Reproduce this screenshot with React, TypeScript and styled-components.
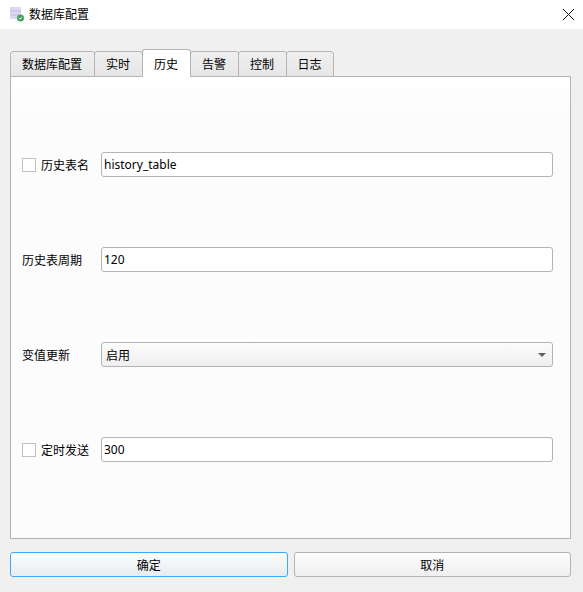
import React from 'react'
import styled, { createGlobalStyle } from 'styled-components'

const GlobalStyle = createGlobalStyle`
  html, body {
    margin: 0;
    padding: 0;
    background: #f0f0f0;
  }
  body {
    font-family: 'Noto Sans', 'Noto Sans CJK SC', sans-serif;
    font-size: 12px;
    color: #000;
  }
  * {
    box-sizing: border-box;
  }
`

const tabs = ['数据库配置', '实时', '历史', '告警', '控制', '日志']

export default function App() {
  return (
    <>
      <GlobalStyle />
      <Dialog>
        <TitleBar>
          <TitleIcon />
          <TitleText>数据库配置</TitleText>
          <CloseButton aria-label='关闭'>
            <svg width='13' height='13' viewBox='0 0 13 13'>
              <path d='M1 1 L12 12 M12 1 L1 12' stroke='#111' strokeWidth='1' fill='none' />
            </svg>
          </CloseButton>
        </TitleBar>
        <Content>
          <TabBar>
            {tabs.map((name, i) => (
              <Tab key={name} $active={name === '历史'} $wide={name.length > 2} $last={i === tabs.length - 1}>
                {name}
              </Tab>
            ))}
          </TabBar>
          <Panel>
            <Row>
              <CheckLabel>
                <CheckBox />
                <span>历史表名</span>
              </CheckLabel>
              <TextField defaultValue='history_table' />
            </Row>
            <Row>
              <Label>历史表周期</Label>
              <TextField defaultValue='120' />
            </Row>
            <Row>
              <Label>变值更新</Label>
              <Select>
                <span>启用</span>
                <Caret />
              </Select>
            </Row>
            <Row>
              <CheckLabel>
                <CheckBox />
                <span>定时发送</span>
              </CheckLabel>
              <TextField defaultValue='300' />
            </Row>
          </Panel>
          <Footer>
            <PushButton $primary>确定</PushButton>
            <PushButton>取消</PushButton>
          </Footer>
        </Content>
      </Dialog>
    </>
  )
}

function TitleIcon() {
  return (
    <IconWrap>
      <svg width='16' height='16' viewBox='0 0 16 16'>
        <rect x='0' y='0' width='11' height='12' rx='1' fill='#dcd6ef' />
        <rect x='0' y='3.5' width='11' height='1' fill='#c4bbe2' />
        <rect x='0' y='7.5' width='11' height='1' fill='#c4bbe2' />
        <circle cx='10.5' cy='11' r='3.5' fill='#43a25a' />
        <path d='M8.9 11 L10.1 12.2 L12.2 10' stroke='#fff' strokeWidth='1' fill='none' />
      </svg>
    </IconWrap>
  )
}

const Dialog = styled.div`
  width: 583px;
  height: 592px;
  display: flex;
  flex-direction: column;
  background: #f0f0f0;
  overflow: hidden;
`

const TitleBar = styled.div`
  height: 29px;
  flex: none;
  display: flex;
  align-items: center;
  padding-left: 10px;
  background: #fff;
`

const IconWrap = styled.div`
  width: 16px;
  height: 16px;
  margin-top: 1px;
  margin-right: 3px;
  display: flex;
`

const TitleText = styled.div`
  flex: 1;
  font-size: 12px;
  line-height: 16px;
`

const CloseButton = styled.div`
  width: 13px;
  height: 13px;
  margin-right: 8px;
  display: flex;
`

const Content = styled.div`
  flex: 1;
  display: flex;
  flex-direction: column;
  padding: 20px 12px 15px 10px;
`

const TabBar = styled.div`
  height: 27px;
  flex: none;
  display: flex;
  align-items: flex-end;
  position: relative;
  z-index: 1;
`

const Tab = styled.div<{ $active?: boolean; $wide?: boolean; $last?: boolean }>`
  width: ${(p) => (p.$wide ? 85 : p.$last ? 48 : 49)}px;
  margin-right: -1px;
  height: ${(p) => (p.$active ? 28 : 26)}px;
  margin-bottom: -1px;
  padding-right: 1px;
  display: flex;
  align-items: center;
  justify-content: center;
  border: 1px solid #b4b4b4;
  border-bottom: ${(p) => (p.$active ? 'none' : '1px solid #b4b4b4')};
  border-radius: 3px 3px 0 0;
  background: ${(p) => (p.$active ? '#fff' : 'linear-gradient(#efefef, #e6e6e6)')};
  position: relative;
  z-index: ${(p) => (p.$active ? 2 : 1)};
`

const Panel = styled.div`
  flex: 1;
  display: flex;
  flex-direction: column;
  justify-content: center;
  gap: 70px;
  padding: 0 17px 1px 11px;
  border: 1px solid #b4b4b4;
  background: linear-gradient(#fff, #fcfcfc 40px);
`

const Row = styled.div`
  height: 25px;
  display: flex;
  align-items: center;
`

const Label = styled.div`
  width: 79px;
  flex: none;
  white-space: nowrap;
`

const CheckLabel = styled.div`
  width: 79px;
  flex: none;
  display: flex;
  align-items: center;
  gap: 5px;
  white-space: nowrap;
`

const CheckBox = styled.div`
  width: 14px;
  height: 14px;
  flex: none;
  border: 1px solid #c0c0c0;
  background: #fff;
`

const TextField = styled.input`
  flex: 1;
  min-width: 0;
  height: 25px;
  padding: 0 2px;
  font: 12px 'Noto Sans', 'Noto Sans CJK SC', sans-serif;
  color: #000;
  background: #fff;
  border: 1px solid #b4b4b4;
  border-radius: 3px;
  outline: none;
`

const Select = styled.div`
  flex: 1;
  height: 25px;
  display: flex;
  align-items: center;
  justify-content: space-between;
  padding: 0 6px 0 4px;
  border: 1px solid #b4b4b4;
  border-radius: 3px;
  background: linear-gradient(#fcfcfc, #efefef);
`

const Caret = styled.div`
  width: 0;
  height: 0;
  border-left: 4px solid transparent;
  border-right: 4px solid transparent;
  border-top: 4px solid #606060;
`

const Footer = styled.div`
  display: flex;
  gap: 6px;
  margin-top: 13px;
  flex: none;
`

const PushButton = styled.div<{ $primary?: boolean }>`
  flex: 1;
  height: 25px;
  display: flex;
  align-items: center;
  justify-content: center;
  border: 1px solid ${(p) => (p.$primary ? '#3fa9f5' : '#b4b4b4')};
  border-radius: 3px;
  background: ${(p) => (p.$primary ? 'linear-gradient(#fbfcfd, #e9ecef)' : 'linear-gradient(#fdfdfd, #efefef)')};
`
